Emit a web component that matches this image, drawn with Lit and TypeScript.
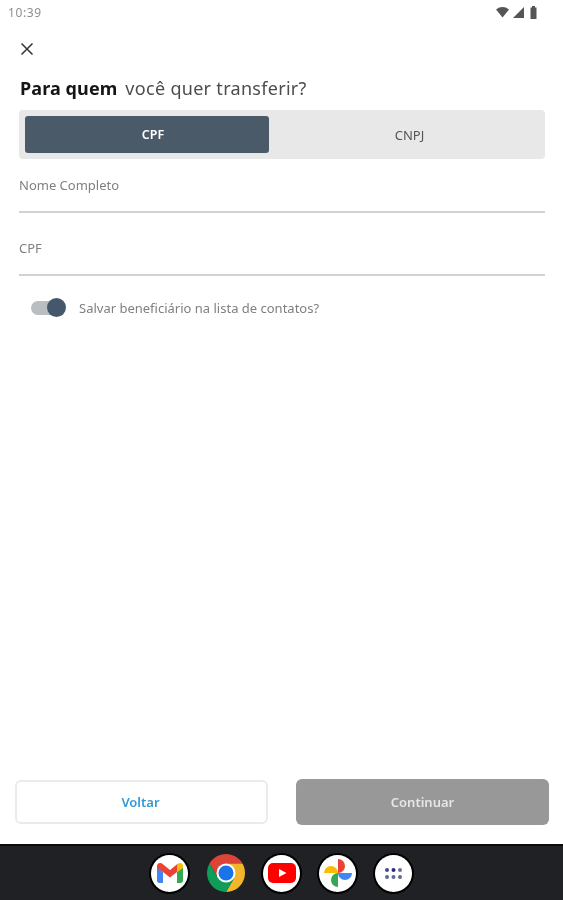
import { LitElement, html, css } from "lit";
import { customElement } from "lit/decorators.js";

@customElement("app-root")
export class AppRoot extends LitElement {
  static styles = css`
    :host { display: block; width: 563px; height: 900px; font-family: "Noto Sans", "Open Sans", sans-serif; background: #fff; }
    * { box-sizing: border-box; }
    .page { width: 563px; height: 900px; display: flex; flex-direction: column; overflow: hidden; filter: blur(0.4px); }
    .status { height: 24px; flex: none; display: flex; align-items: center; justify-content: space-between; padding: 0 26px 0 8px; color: #8f8f8f; font-size: 12px; letter-spacing: .6px; }
    .status-icons { display: flex; align-items: center; color: #555; }
    .status-icons svg { display: block; }
    .wifi { margin-right: 4px; }
    .sig { margin-right: 6px; }
    .main { flex: 1; display: flex; flex-direction: column; padding: 0 18px 0 19px; min-height: 0; }
    .close { margin: 18px 0 0 1px; width: 14px; height: 14px; display: block; }
    .title { margin: 19px 0 0 1px; font-size: 18px; line-height: 26px; height: 26px; color: #4d4d4d; font-weight: 400; letter-spacing: .3px; white-space: nowrap; }
    .title b { color: #151515; font-weight: 700; letter-spacing: .1px; margin-right: 3px; }
    .seg { margin-top: 9px; height: 49px; background: #e8e8e8; border-radius: 4px; padding: 6px; display: flex; }
    .seg > div { flex: 1; display: flex; align-items: center; justify-content: center; font-size: 13px; color: #555; }
    .seg .on { flex: none; width: 244px; background: #4a5a68; color: #fff; border-radius: 3px; font-weight: 600; font-size: 12.5px; padding-left: 12px; }
    .seg .off { padding-left: 11px; }
    .field { height: 37px; display: flex; align-items: flex-start; border-bottom: 2px solid #d2d2d2; font-size: 13px; line-height: 18px; color: #808080; }
    .f1 { margin-top: 17px; }
    .f2 { margin-top: 26px; }
    .toggle-row { margin-top: 22px; display: flex; align-items: center; padding-left: 12px; font-size: 13px; color: #808080; height: 20px; }
    .toggle { position: relative; width: 35px; height: 20px; flex: none; margin-right: 13px; }
    .track { position: absolute; left: 0; top: 3px; width: 28px; height: 14px; border-radius: 7px; background: #b9bec2; }
    .knob { position: absolute; right: 0; top: 0; width: 19px; height: 19px; border-radius: 50%; background: #45586b; }
    .actions { margin-top: auto; margin-left: -4px; margin-right: -4px; padding-bottom: 19px; display: flex; justify-content: space-between; align-items: center; }
    .btn { display: flex; align-items: center; justify-content: center; font-size: 13px; font-weight: 600; border-radius: 6px; }
    .back { width: 253px; height: 44px; background: #fff; border: 2px solid #ebebeb; color: #3398d6; padding-right: 2px; }
    .next { width: 253px; height: 46px; background: #989898; color: #e6e6e6; }
    .dock { height: 56px; flex: none; background: #202124; border-top: 2px solid #0c0c0c; display: flex; justify-content: center; align-items: center; gap: 18px; }
    .app { width: 37px; height: 37px; margin: 0 .5px; border-radius: 50%; background: #fff; display: flex; align-items: center; justify-content: center; box-shadow: 0 0 0 2px #000; }
    .app svg { display: block; }
    .chrome { width: 38px; height: 38px; margin: 0; background: none; box-shadow: none; }
  `;

  render() {
    return html`
      <div class="page">
        <div class="status">
          <span>10:39</span>
          <span class="status-icons">
            <svg class="wifi" width="13" height="11" viewBox="0 0 13 11"><path fill="currentColor" d="M0 2.500C4-.8 9-.8 13 2.500L6.500 10.500Z"/></svg>
            <svg class="sig" width="11" height="11" viewBox="0 0 11 11"><path fill="currentColor" d="M11 0V11H0Z"/></svg>
            <svg width="7" height="13" viewBox="0 0 7 13"><path fill="currentColor" d="M2 0H5V1.500H6.500V13H.5V1.500H2Z"/></svg>
          </span>
        </div>
        <div class="main">
          <svg class="close" viewBox="0 0 14 14"><path d="M1.500 1.500L12.500 12.500M12.500 1.500L1.500 12.500" stroke="#333" stroke-width="1.500" fill="none"/></svg>
          <h1 class="title"><b>Para quem</b> você quer transferir?</h1>
          <div class="seg"><div class="on">CPF</div><div class="off">CNPJ</div></div>
          <div class="field f1">Nome Completo</div>
          <div class="field f2">CPF</div>
          <div class="toggle-row">
            <div class="toggle"><div class="track"></div><div class="knob"></div></div>
            Salvar beneficiário na lista de contatos?
          </div>
          <div class="actions">
            <div class="btn back">Voltar</div>
            <div class="btn next">Continuar</div>
          </div>
        </div>
        <div class="dock">
          <div class="app">
            <svg width="26" height="20" viewBox="0 0 26 20">
              <path fill="#4285f4" d="M0 4V17.500C0 18.900 1 20 2.500 20H6V9Z"/>
              <path fill="#34a853" d="M26 4V17.500C26 18.900 25 20 23.500 20H20V9Z"/>
              <path fill="#ea4335" d="M0 5V3C0 .5 3-.9 5 .6L13 7 21 .6 20 9 13 14.500 6 9 0 5Z"/>
              <path fill="#fbbc04" d="M20 9V2L21.500 .6C23-.9 26 .5 26 3V5Z"/>
            </svg>
          </div>
          <div class="app chrome">
            <svg width="38" height="38" viewBox="0 0 38 38">
              <path fill="#db4437" d="M19 9.500H35.450A19 19 0 0 0 2.550 9.500L10.770 23.750Z"/>
              <path fill="#f1b62c" d="M35.450 9.500A19 19 0 0 1 19 38L27.230 23.750 19 9.500Z"/>
              <path fill="#0f9d58" d="M19 38A19 19 0 0 1 2.550 9.500L10.770 23.750H27.230Z"/>
              <circle cx="19" cy="19" r="9.500" fill="#fff"/>
              <circle cx="19" cy="19" r="7.500" fill="#1a73e8"/>
            </svg>
          </div>
          <div class="app">
            <svg width="28" height="20" viewBox="0 0 28 20">
              <rect width="28" height="20" rx="5" fill="#f00"/>
              <path fill="#fff" d="M11 6L18.500 10 11 14Z"/>
            </svg>
          </div>
          <div class="app">
            <svg width="28" height="28" viewBox="0 0 28 28">
              <path fill="#fbbc04" d="M0 14A7 7 0 0 1 7 7 7 7 0 0 1 14 14Z"/>
              <path fill="#ea4335" d="M14 0A7 7 0 0 1 21 7 7 7 0 0 1 14 14Z"/>
              <path fill="#4285f4" d="M28 14A7 7 0 0 1 21 21 7 7 0 0 1 14 14Z"/>
              <path fill="#34a853" d="M14 28A7 7 0 0 1 7 21 7 7 0 0 1 14 14Z"/>
            </svg>
          </div>
          <div class="app">
            <svg width="17" height="11" viewBox="0 0 17 11">
              <g fill="#5f6b8a">
                <circle cx="2" cy="2" r="2" fill="#4a4a8a"/><circle cx="8.500" cy="2" r="2" fill="#2a2a8a"/><circle cx="15" cy="2" r="2" fill="#7a6a8a"/>
                <circle cx="2" cy="9" r="2"/><circle cx="8.500" cy="9" r="2"/><circle cx="15" cy="9" r="2"/>
              </g>
            </svg>
          </div>
        </div>
      </div>
    `;
  }
}
